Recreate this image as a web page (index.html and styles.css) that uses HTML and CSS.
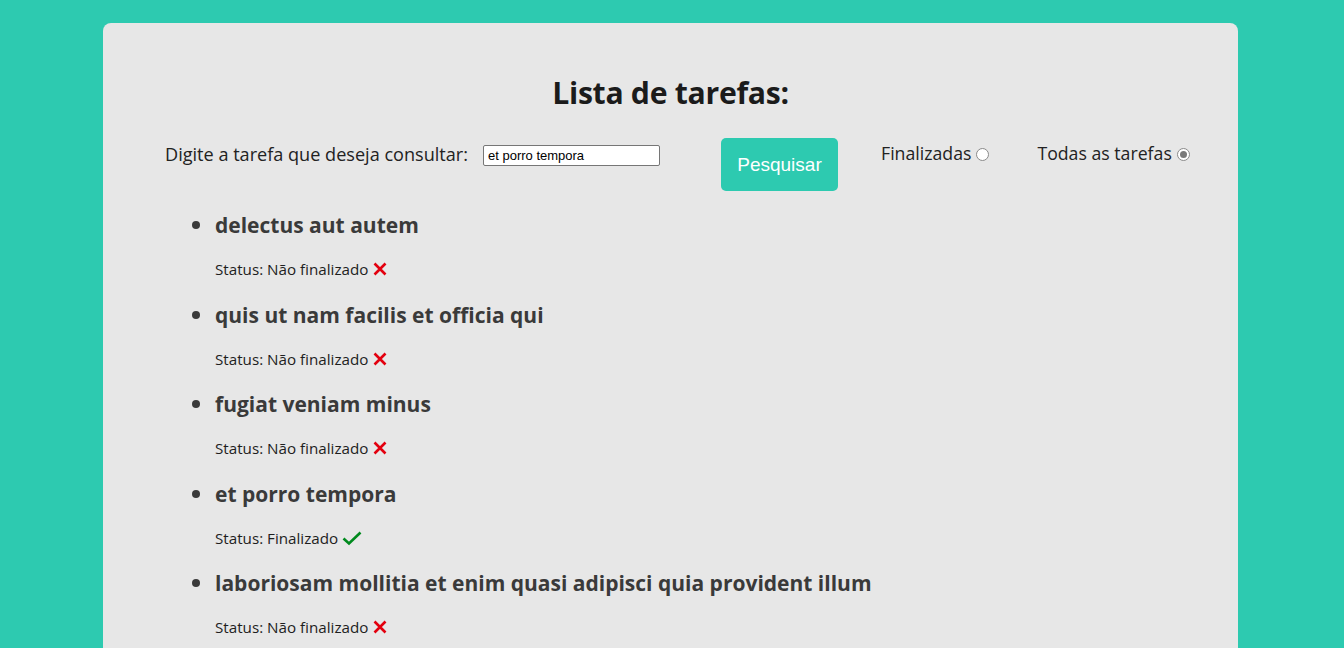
FILE: index.html
```html
<!DOCTYPE html>
<html lang="pt-BR">
<head>
<meta charset="utf-8">
<title>Lista de tarefas</title>
<link rel="stylesheet" href="styles.css">
</head>
<body>
<main class="card">
  <h1 class="title">Lista de tarefas:</h1>
  <div class="controls">
    <label class="search-label" for="q">Digite a tarefa que deseja consultar:</label>
    <input class="search-input" id="q" type="text" value="et porro tempora">
    <button class="btn" type="button">Pesquisar</button>
    <label class="radio-label">Finalizadas <input type="radio" name="f" class="radio"></label>
    <label class="radio-label radio-last">Todas as tarefas <input type="radio" name="f" class="radio" checked></label>
  </div>
  <ul class="tasks">
    <li class="task">
      <h3 class="task-title">delectus aut autem</h3>
      <p class="status">Status: Não finalizado <svg class="ico" viewBox="0 0 16 16" width="16" height="16"><path d="M2.5 2.5 L13.5 13.5 M13.5 2.5 L2.5 13.5" stroke="#e3000f" stroke-width="2.6"/></svg></p>
    </li>
    <li class="task">
      <h3 class="task-title">quis ut nam facilis et officia qui</h3>
      <p class="status">Status: Não finalizado <svg class="ico" viewBox="0 0 16 16" width="16" height="16"><path d="M2.5 2.5 L13.5 13.5 M13.5 2.5 L2.5 13.5" stroke="#e3000f" stroke-width="2.6"/></svg></p>
    </li>
    <li class="task">
      <h3 class="task-title">fugiat veniam minus</h3>
      <p class="status">Status: Não finalizado <svg class="ico" viewBox="0 0 16 16" width="16" height="16"><path d="M2.5 2.5 L13.5 13.5 M13.5 2.5 L2.5 13.5" stroke="#e3000f" stroke-width="2.6"/></svg></p>
    </li>
    <li class="task">
      <h3 class="task-title">et porro tempora</h3>
      <p class="status">Status: Finalizado <svg class="ico ico-check" viewBox="0 0 20 16" width="20" height="16"><path d="M1.5 8.5 L7 13.5 L18.5 2.5" fill="none" stroke="#008a1e" stroke-width="2.6"/></svg></p>
    </li>
    <li class="task">
      <h3 class="task-title">laboriosam mollitia et enim quasi adipisci quia provident illum</h3>
      <p class="status">Status: Não finalizado <svg class="ico" viewBox="0 0 16 16" width="16" height="16"><path d="M2.5 2.5 L13.5 13.5 M13.5 2.5 L2.5 13.5" stroke="#e3000f" stroke-width="2.6"/></svg></p>
    </li>
  </ul>
</main>
</body>
</html>
```
FILE: styles.css
```css
html, body {
  margin: 0;
  padding: 0;
}
body {
  background: #2dcab0;
  font-family: "Open Sans", "Noto Sans", sans-serif;
  color: #1e1e1e;
  height: 648px;
  overflow: hidden;
}
.card {
  width: 1135px;
  margin: 23px 0 0 103px;
  background: #e7e7e7;
  border-radius: 8px;
  padding: 50px 0 0 0;
  min-height: 700px;
  box-sizing: border-box;
}
.title {
  margin: 0;
  text-align: center;
  font-size: 30.2px;
  font-weight: 700;
  line-height: 40px;
  color: #1b1b1b;
  letter-spacing: -0.3px;
}
.controls {
  display: flex;
  align-items: flex-start;
  margin-top: 25px;
  padding-left: 62px;
}
.search-label {
  font-size: 18.1px;
  line-height: 24px;
  margin-top: 4px;
  color: #222;
}
.search-input {
  margin: 7px 0 0 15px;
  width: 177px;
  height: 21px;
  box-sizing: border-box;
  border: 1px solid #767676;
  border-radius: 2px;
  background: #fff;
  font-family: "Liberation Sans", Arial, sans-serif;
  font-size: 13px;
  padding: 1px 4px;
  color: #000;
}
.btn {
  margin-left: 61px;
  width: 117px;
  height: 53px;
  border: none;
  border-radius: 5px;
  background: #2dcab0;
  color: #fff;
  font-family: "Liberation Sans", Arial, sans-serif;
  font-size: 19px;
}
.radio-label {
  display: flex;
  align-items: center;
  font-size: 17.7px;
  line-height: 24px;
  margin: 3px 0 0 43px;
  color: #222;
}
.radio-last {
  margin-left: 48px;
}
.radio {
  appearance: none;
  -webkit-appearance: none;
  margin: 2px 0 0 5px;
  width: 13px;
  height: 13px;
  border: 1px solid #8a8a8a;
  border-radius: 50%;
  background: #fff;
  box-sizing: border-box;
  display: grid;
  place-content: center;
}
.radio:checked::before {
  content: "";
  width: 7px;
  height: 7px;
  border-radius: 50%;
  background: #7a7a7a;
}
.tasks {
  margin: 18px 0 0 0;
  padding-left: 112px;
  list-style: disc;
}
.task-title {
  margin: 0;
  font-size: 21px;
  line-height: 28px;
  font-weight: 700;
  color: #3a3a3a;
}
.status {
  margin: 20px 0 19.5px 0;
  font-size: 15.2px;
  line-height: 20px;
  color: #1e1e1e;
  display: flex;
  align-items: center;
  gap: 4px;
}
.task::marker {
  color: #3a3a3a;
  font-size: 22px;
}
.ico {
  display: block;
}
```
